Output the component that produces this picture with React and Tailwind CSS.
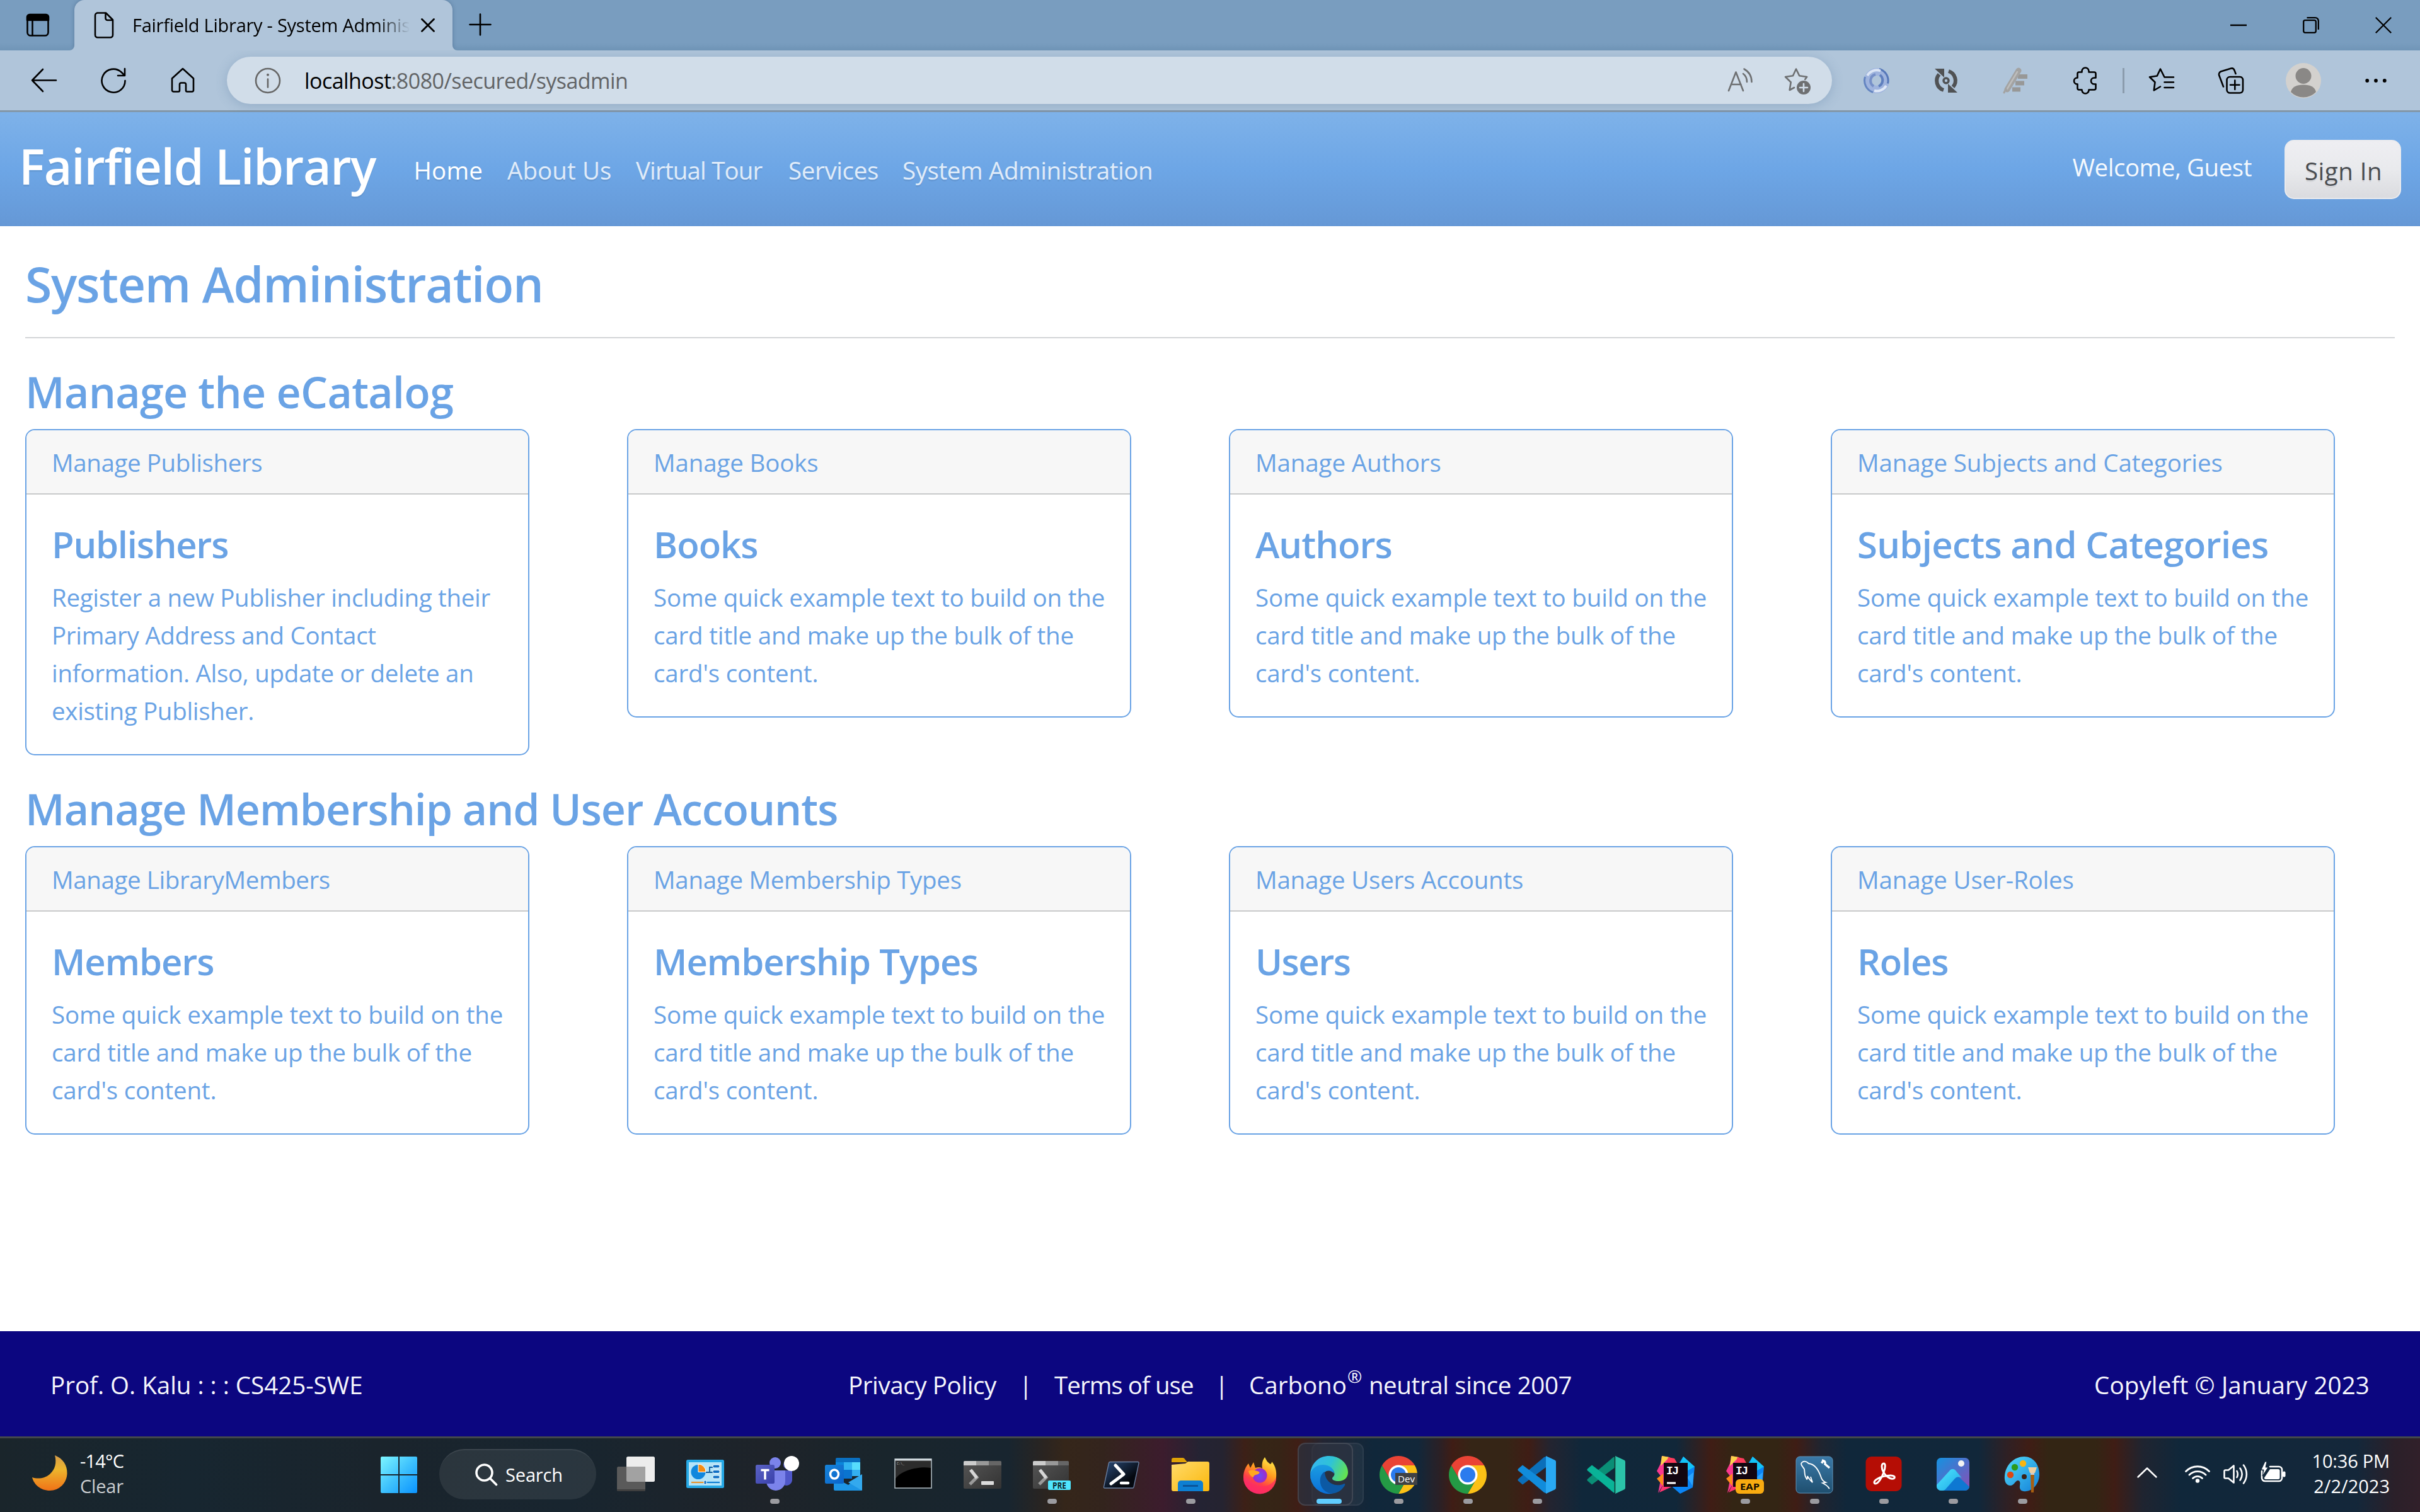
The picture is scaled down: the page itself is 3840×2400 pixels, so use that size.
import React from 'react';

const FONT = "font-['Open_Sans','Noto_Sans',sans-serif]";

/* ---------- shared svg helpers ---------- */

function Glyph({ children, size = 'size-[44px]', className = '' }) {
  return (
    <svg viewBox="0 0 44 44" fill="none" stroke="currentColor" strokeWidth="2.6" strokeLinecap="round" strokeLinejoin="round" className={`block shrink-0 ${size} ${className}`}>
      {children}
    </svg>
  );
}

function Slot({ children, w = 'w-[110px]' }) {
  return <div className={`flex h-full shrink-0 items-center justify-center ${w}`}>{children}</div>;
}

/* ---------- browser chrome ---------- */

function TabBar() {
  return (
    <div className="flex h-[80px] bg-[#799dbe] bg-linear-to-b from-[#799dbf] from-85% to-[#7095b7] text-black">
      <div className="flex w-[118px] shrink-0 items-center justify-center">
        <Glyph className="ml-[2px]">
          <rect x="5.5" y="5.5" width="33" height="33" rx="5" />
          <path d="M5 9c0-2 2-4 4-4h26c2 0 4 2 4 4v5H5z" fill="currentColor" />
          <path d="M13.5 14v24" />
        </Glyph>
      </div>
      <div className="relative flex w-[600px] shrink-0 items-center rounded-t-[16px] bg-[#b0c5da] shadow-[0_0_6px_rgba(50,80,115,0.45)] [clip-path:inset(0_-8px_0_-8px)]">
        <Glyph className="ml-[25px]">
          <path d="M11 2.500h14l11 11v24a4 4 0 0 1-4 4H12a4 4 0 0 1-4-4v-31a4 4 0 0 1 4-4z" />
          <path d="M24.500 3v8a3 3 0 0 0 3 3h8" />
        </Glyph>
        <div className="ml-[23px] w-[440px] text-[29px] leading-[40px] tracking-[-0.26px] whitespace-nowrap text-black [mask-image:linear-gradient(to_right,black_88%,transparent_100%)]">
          Fairfield Library - System Adminis
        </div>
        <svg viewBox="0 0 22 22" className="ml-[18px] size-[22px]" fill="none" stroke="#000" strokeWidth="2.800" strokeLinecap="round">
          <path d="M1.500 1.500l19 19M20.500 1.500l-19 19" />
        </svg>
        <svg viewBox="0 0 8 8" className="absolute bottom-0 left-[-8px] size-[8px]">
          <path d="M8 0v8H0a8 8 0 0 0 8-8z" fill="#b0c5da" />
        </svg>
        <svg viewBox="0 0 8 8" className="absolute right-[-8px] bottom-0 size-[8px]">
          <path d="M0 0v8h8a8 8 0 0 1-8-8z" fill="#b0c5da" />
        </svg>
      </div>
      <svg viewBox="0 0 36 36" className="mt-[21px] ml-[26px] size-[36px]" fill="none" stroke="#000" strokeWidth="2.600" strokeLinecap="round">
        <path d="M18 1.500v33M1.500 18h33" />
      </svg>
      <div className="ml-auto flex pr-px">
        <Slot w="w-[116px]">
          <svg viewBox="0 0 26 26" className="size-[26px]" stroke="#000" strokeWidth="2.500">
            <path d="M0 13h26" />
          </svg>
        </Slot>
        <Slot w="w-[114px]">
          <svg viewBox="0 0 26 26" className="size-[26px]" fill="none" stroke="#000" strokeWidth="2.300">
            <rect x="1.200" y="5.200" width="19.600" height="19.600" rx="2.500" />
            <path d="M6.500 1.200H20a4.800 4.800 0 0 1 4.800 4.800v14" />
          </svg>
        </Slot>
        <Slot w="w-[115px]">
          <svg viewBox="0 0 26 26" className="size-[26px]" stroke="#000" strokeWidth="2.200">
            <path d="M.8.800l24.400 24.400M25.200.8L.8 25.200" />
          </svg>
        </Slot>
      </div>
    </div>
  );
}

function Toolbar() {
  return (
    <div className="flex h-[98px] items-center border-b-3 border-[#8297a9] bg-[#b0c5da] pl-[15px] text-black">
      <Slot>
        <Glyph>
          <path d="M41 21.500H3M20 4L3 21.500 20 39" />
        </Glyph>
      </Slot>
      <Slot>
        <Glyph>
          <path d="M40.500 22A18.500 18.500 0 1 1 34.500 8.500L39.500 13.500M40 3v11h-11" />
        </Glyph>
      </Slot>
      <Slot>
        <Glyph>
          <path d="M5 18.500L22 3l17 15.500V37a2.500 2.500 0 0 1-2.500 2.500H29a2 2 0 0 1-2-2V28a2.500 2.500 0 0 0-2.500-2.500h-5A2.500 2.500 0 0 0 17 28v9.500a2 2 0 0 1-2 2H7.500A2.500 2.500 0 0 1 5 37z" />
        </Glyph>
      </Slot>
      <div className="ml-[15px] flex h-[75px] w-[2547px] shrink-0 items-center rounded-full bg-[#d1dde9] shadow-[0_3px_18px_rgba(80,115,155,0.3)]">
        <Glyph className="ml-[43px] text-[#666]">
          <circle cx="22" cy="22" r="19" />
          <path d="M22 19.500v13" />
          <circle cx="22" cy="12.800" r="1.300" fill="currentColor" strokeWidth="1.400" />
        </Glyph>
        <div className="ml-[36px] text-[34px] leading-[50px] tracking-[-0.55px] text-black">
          localhost<span className="text-[#626466]">:8080/secured/sysadmin</span>
        </div>
        <div className="ml-auto flex h-full pr-[10px] text-[#6e7072]">
          <Slot w="w-[90px]">
            <Glyph>
              <path d="M3 38L14.500 8.500 26 38M7 28h15.500" />
              <path d="M26 11c4 3 6 7.500 6 13M27.500 3.500c8 4.500 12 11.500 12 20.500" />
            </Glyph>
          </Slot>
          <Slot w="w-[90px]">
            <Glyph>
              <path d="M17 33l-7.300 4 2-12.500-8.700-8.500 12-1.700L20 3.500l5.200 10.800 12 1.700-3 4" />
              <circle cx="32" cy="33" r="11" fill="currentColor" stroke="none" />
              <path d="M32 27v12M26 33h12" stroke="#d1dde9" />
            </Glyph>
          </Slot>
        </div>
      </div>
      <div className="ml-[16px] flex h-full">
        <Slot>
          <svg viewBox="0 0 44 44" className="size-[44px]" fill="none">
            <circle cx="22" cy="22" r="14" stroke="#9fb4de" strokeWidth="12" />
            <path d="M26 3.500a19 19 0 0 1 13.500 23" stroke="#5678b8" strokeWidth="3" />
            <path d="M16 40.500A19.500 19.500 0 0 1 3.500 16" stroke="#6485c1" strokeWidth="3" />
            <path d="M7 14A17 17 0 0 1 28 6.500" stroke="#dbe5f5" strokeWidth="4" />
            <path d="M37 30a17 17 0 0 1-19 8" stroke="#dfe8f7" strokeWidth="4" />
            <path d="M17 31A10.500 10.500 0 0 1 20 12" stroke="#7690c8" strokeWidth="4" />
            <path d="M27 13a10.500 10.500 0 0 1-2 18" stroke="#5f7fbe" strokeWidth="4" />
          </svg>
        </Slot>
        <Slot>
          <svg viewBox="0 0 44 44" className="size-[44px]" fill="none" stroke="#505254" strokeWidth="6">
            <path d="M18 37A15.500 15.500 0 0 1 11 12" />
            <path d="M26 7a15.500 15.500 0 0 1 7 25" />
            <path d="M4 3h15v14z" fill="#505254" stroke="none" />
            <path d="M40 41H25V27z" fill="#505254" stroke="none" />
            <circle cx="22" cy="22" r="4" strokeWidth="3.500" />
          </svg>
        </Slot>
        <Slot>
          <svg viewBox="0 0 44 44" className="size-[44px]" fill="none" strokeLinecap="round">
            <g stroke="#989897" strokeWidth="7" strokeLinecap="butt">
              <path d="M26 15.500h15M22 26h14M17 36h13" />
            </g>
            <path d="M27 6L9 36" stroke="#a3a3a2" strokeWidth="9" />
            <path d="M25 8L9 35" stroke="#bdbdbc" strokeWidth="2.500" />
            <path d="M7 35l-3 6" stroke="#a3a3a2" strokeWidth="3" />
          </svg>
        </Slot>
        <Slot>
          <Glyph>
            <path d="M17.500 8.500V7a5.500 5.500 0 0 1 11 0v1.500H37a2.500 2.500 0 0 1 2.500 2.500v6.500H37a5 5 0 0 0 0 10h2.500V34a2.500 2.500 0 0 1-2.500 2.500h-8.500V37a5.500 5.500 0 0 1-11 0v-.5H13a2.500 2.500 0 0 1-2.500-2.500v-6.500H10a5 5 0 0 1 0-10h.5V11A2.500 2.500 0 0 1 13 8.500z" />
          </Glyph>
        </Slot>
        <div className="flex w-[12px] items-center justify-center">
          <div className="h-[40px] w-[3px] bg-[#8b9cad]" />
        </div>
        <Slot>
          <Glyph>
            <path d="M41 16.500H26.500L20 3.500l-5.200 11L3 16.200l8.500 8.300L9.800 37.500 20 31.500M26.500 24.500H41M26.500 33H41" />
          </Glyph>
        </Slot>
        <Slot>
          <Glyph>
            <rect x="15.500" y="16" width="25.500" height="25.500" rx="5" />
            <path d="M28.300 21.500v14.500M21 28.800h14.500" />
            <path d="M10 31.500L3.200 13.500a5 5 0 0 1 2.800-6L21.500 2.800c2.500-.8 5 .3 6 2.700l2 5.500" />
          </Glyph>
        </Slot>
        <Slot w="w-[120px]">
          <svg viewBox="0 0 56 56" className="size-[56px]">
            <circle cx="28" cy="28" r="28" fill="#d3d1ce" />
            <circle cx="28" cy="20.500" r="12.500" fill="#8a8886" />
            <path d="M8 46c2-8 9-11.500 20-11.500S46 38 48 46a28 28 0 0 1-40 0z" fill="#8a8886" />
          </svg>
        </Slot>
        <Slot>
          <svg viewBox="0 0 34 6" className="h-[6px] w-[34px]">
            <circle cx="3.200" cy="3" r="2.900" />
            <circle cx="17" cy="3" r="2.900" />
            <circle cx="30.800" cy="3" r="2.900" />
          </svg>
        </Slot>
      </div>
    </div>
  );
}

/* ---------- page ---------- */

const NAV = [
  { label: 'Home', cls: 'w-[148.5px] tracking-[0.2px] text-white' },
  { label: 'About Us', cls: 'w-[204px] tracking-[0.09px] text-white/80' },
  { label: 'Virtual Tour', cls: 'w-[242px] tracking-[-0.84px] text-white/80' },
  { label: 'Services', cls: 'w-[181px] tracking-[-0.36px] text-white/80' },
  { label: 'System Administration', cls: 'tracking-[-0.4px] text-white/80' },
];

function SiteHeader() {
  return (
    <header className="flex h-[181px] items-start bg-linear-to-b from-[#7eb2e9] via-[#6da6e6] via-50% to-[#6598d6] text-[38.5px] leading-[60px]">
      <div className="mt-[38px] ml-[30px] w-[626.5px] text-[77px] leading-[96px] font-semibold tracking-[-1.22px] text-white [text-shadow:0_3px_0_rgba(0,0,0,0.06)]">
        Fairfield Library
      </div>
      <nav className="mt-[62px] flex whitespace-nowrap [text-shadow:0_3px_0_rgba(0,0,0,0.06)]">
        {NAV.map((n) => (
          <a key={n.label} className={n.cls}>
            {n.label}
          </a>
        ))}
      </nav>
      <div className="mt-[57px] ml-auto tracking-[-0.46px] text-white/95">Welcome, Guest</div>
      <button className="mt-[44px] mr-[30px] ml-[52px] h-[94px] w-[185px] rounded-[15px] border-2 border-[#eaebee] bg-linear-to-b from-[#eeeef2] via-[#e9eaed] via-50% to-[#dadbdf] pt-[4px] pl-[2px] tracking-[0.5px] text-[#4a4d51] [text-shadow:0_3px_0_rgba(0,0,0,0.06)]">
        Sign In
      </button>
    </header>
  );
}

const LOREM = ["Some quick example text to build on the", 'card title and make up the bulk of the', "card's content."];

const SECTIONS = [
  {
    title: 'Manage the eCatalog',
    cls: 'tracking-[-0.7px]',
    cards: [
      {
        head: 'Manage Publishers',
        title: 'Publishers',
        hcls: 'tracking-[-0.4px]',
        tcls: 'tracking-[-1.26px]',
        lines: ['Register a new Publisher including their', 'Primary Address and Contact', 'information. Also, update or delete an', 'existing Publisher.'],
      },
      { head: 'Manage Books', title: 'Books', hcls: 'tracking-[-0.15px]', tcls: 'tracking-[-1px]', lines: LOREM },
      { head: 'Manage Authors', title: 'Authors', hcls: 'tracking-[-0.1px]', tcls: 'tracking-[-1px]', lines: LOREM },
      { head: 'Manage Subjects and Categories', title: 'Subjects and Categories', hcls: 'tracking-[-0.1px]', tcls: 'tracking-[-0.68px]', lines: LOREM },
    ],
  },
  {
    title: 'Manage Membership and User Accounts',
    cls: 'tracking-[-1.02px]',
    cards: [
      { head: 'Manage LibraryMembers', title: 'Members', hcls: 'tracking-[-0.4px]', tcls: 'tracking-[-1.1px]', lines: LOREM },
      { head: 'Manage Membership Types', title: 'Membership Types', hcls: 'tracking-[-0.3px]', tcls: 'tracking-[-1px]', lines: LOREM },
      { head: 'Manage Users Accounts', title: 'Users', hcls: 'tracking-[-0.2px]', tcls: 'tracking-[-1.5px]', lines: LOREM },
      { head: 'Manage User-Roles', title: 'Roles', hcls: 'tracking-[-0.15px]', tcls: 'tracking-[-1.2px]', lines: LOREM },
    ],
  },
];

function Card({ card }) {
  return (
    <article className="overflow-hidden rounded-[15px] border-2 border-[#6aa3e5] bg-white text-[38.5px] leading-[60px] whitespace-nowrap">
      <div className={`h-[102px] border-b-2 border-[#c9cacb] bg-[#f7f7f7] pt-[21px] pl-[40px] ${card.hcls}`}>{card.head}</div>
      <div className="pt-[43px] pb-[39px] pl-[40px]">
        <h3 className={`mb-[18px] text-[58px] leading-[72px] font-semibold ${card.tcls}`}>{card.title}</h3>
        {card.lines.map((l) => (
          <p key={l} className={card.lines === LOREM ? 'tracking-[-0.17px]' : 'tracking-[-0.31px]'}>
            {l}
          </p>
        ))}
      </div>
    </article>
  );
}

function Main() {
  return (
    <main className="h-[1754px] bg-white px-[40px] pt-[44px] text-[#6aa3e5]">
      <h1 className="text-[77px] leading-[96px] font-semibold tracking-[-1.21px]">System Administration</h1>
      <hr className="mt-[36px] border-t-2 border-[#d3d5d7]" />
      {SECTIONS.map((s) => (
        <section key={s.title} className="pt-[43px]">
          <h2 className={`mb-[17px] text-[68px] leading-[84px] font-semibold ${s.cls}`}>{s.title}</h2>
          <div className="grid grid-cols-[repeat(4,800px)] items-start gap-x-[155px]">
            {s.cards.map((c) => (
              <Card key={c.head} card={c} />
            ))}
          </div>
        </section>
      ))}
    </main>
  );
}

function SiteFooter() {
  return (
    <footer className="flex h-[167px] bg-[#0c0680] px-[80px] pt-[55px] text-[38.5px] leading-[60px] whitespace-nowrap text-[#f6f6fc]">
      <div className="w-[1266px]">Prof. O. Kalu : : : CS425-SWE</div>
      <div className="flex">
        <span className="w-[271px] tracking-[-0.39px]">Privacy Policy</span>
        <span className="w-[56px]">|</span>
        <span className="w-[255px] tracking-[-0.97px]">Terms of use</span>
        <span className="w-[54px]">|</span>
        <span>Carbono</span>
        <span className="relative top-[-14px] w-[35px] pl-px text-[28px]">®</span>
        <span className="tracking-[-0.38px]">neutral since 2007</span>
      </div>
      <div className="ml-auto tracking-[0.14px]">Copyleft © January 2023</div>
    </footer>
  );
}

/* ---------- taskbar ---------- */

function App60({ children, dot, active }) {
  return (
    <div className="relative flex h-full w-[110px] shrink-0 justify-center">
      {active && (
        <>
          <div className="absolute top-[7px] left-[27px] h-[100px] w-[83px] rounded-[12px] border-2 border-white/6 bg-white/5" />
          <div className="absolute top-[7px] left-[5px] h-[100px] w-[88px] rounded-[12px] border-2 border-white/10 bg-[#2b3240]/70" />
        </>
      )}
      <svg viewBox="0 0 60 60" className="relative mt-[28px] block size-[60px] overflow-visible">
        {children}
      </svg>
      {dot && <div className="absolute top-[96px] left-[47.5px] h-[8px] w-[15px] rounded-full bg-[#9b9ba0]" />}
      {active && <div className="absolute top-[96px] left-[35px] h-[8px] w-[40px] rounded-full bg-[#60cdff]" />}
    </div>
  );
}

function Defs() {
  return (
    <svg className="absolute size-0">
      <defs>
        <linearGradient id="moon" x1="0" y1="0" x2="0" y2="1">
          <stop offset="0" stopColor="#d69c48" />
          <stop offset=".4" stopColor="#ecb52d" />
          <stop offset="1" stopColor="#f07217" />
        </linearGradient>
        <linearGradient id="win" x1="0" y1="0" x2="1" y2="1">
          <stop offset="0" stopColor="#7df6ff" />
          <stop offset=".5" stopColor="#3fc2fd" />
          <stop offset="1" stopColor="#0a93ff" />
        </linearGradient>
        <linearGradient id="ps" x1="0" y1="0" x2="1" y2="1">
          <stop offset="0" stopColor="#2b4b78" />
          <stop offset=".7" stopColor="#04080f" />
        </linearGradient>
        <linearGradient id="folder" x1="0" y1="0" x2="1" y2="1">
          <stop offset="0" stopColor="#ffdb6b" />
          <stop offset="1" stopColor="#fbb70b" />
        </linearGradient>
        <linearGradient id="ff" x1=".8" y1="0" x2=".3" y2="1">
          <stop offset="0" stopColor="#fff04a" />
          <stop offset=".4" stopColor="#ff9a1f" />
          <stop offset=".7" stopColor="#ff4048" />
          <stop offset="1" stopColor="#f0139a" />
        </linearGradient>
        <radialGradient id="ffp">
          <stop offset="0" stopColor="#6b4cf5" />
          <stop offset="1" stopColor="#a029c8" />
        </radialGradient>
        <linearGradient id="edgeTop" x1="0" y1=".3" x2="1" y2=".6">
          <stop offset="0" stopColor="#35b6f0" />
          <stop offset=".5" stopColor="#2fc3d6" />
          <stop offset="1" stopColor="#64e34f" />
        </linearGradient>
        <linearGradient id="edgeLeft" x1="0" y1="0" x2="0" y2="1">
          <stop offset="0" stopColor="#1b9de2" />
          <stop offset="1" stopColor="#0a6fd8" />
        </linearGradient>
        <linearGradient id="dark" x1="0" y1="0" x2="1" y2="1">
          <stop offset="0" stopColor="#555" />
          <stop offset="1" stopColor="#333" />
        </linearGradient>
        <linearGradient id="mysql" x1="0" y1="0" x2="0" y2="1">
          <stop offset="0" stopColor="#3a79a8" />
          <stop offset="1" stopColor="#1f4f6f" />
        </linearGradient>
        <linearGradient id="photo" x1="0" y1="0" x2="1" y2="1">
          <stop offset="0" stopColor="#1492e0" />
          <stop offset="1" stopColor="#8a4db5" />
        </linearGradient>
        <linearGradient id="mount" x1="0" y1="0" x2="1" y2="1">
          <stop offset="0" stopColor="#50e6ff" />
          <stop offset="1" stopColor="#1ca8e6" />
        </linearGradient>
        <linearGradient id="palette" x1="0" y1="0" x2="1" y2="1">
          <stop offset="0" stopColor="#54dcfb" />
          <stop offset="1" stopColor="#1280d8" />
        </linearGradient>
        <linearGradient id="teams" x1="0" y1="0" x2="1" y2="1">
          <stop offset="0" stopColor="#5a62c3" />
          <stop offset="1" stopColor="#3940ab" />
        </linearGradient>
        <linearGradient id="olk" x1="0" y1="0" x2="1" y2="1">
          <stop offset="0" stopColor="#1784d9" />
          <stop offset="1" stopColor="#0a63c9" />
        </linearGradient>
      </defs>
    </svg>
  );
}

function ChromeMark() {
  return (
    <>
      <path d="M30 15h26a30 30 0 0 1-26 45l13-22.500z" fill="#fbc116" />
      <path d="M30 60A30 30 0 0 1 4 15l13 22.500L30 45l13-7.500z" fill="#249a45" />
      <path d="M30 15h26a30 30 0 0 0-52 0l13 22.500z" fill="#ea4335" />
      <circle cx="30" cy="30" r="15.500" fill="#fff" />
      <circle cx="30" cy="30" r="12" fill="#2b7bee" />
    </>
  );
}

function CodeMark({ a, b, c }) {
  return (
    <>
      <path d="M44 1v17L7 45.500 0 39.500c-.8-.8-.8-2 0-2.800L41 2z" fill={a} />
      <path d="M44 59V42L7 14.500 0 20.500c-.8.800-.8 2 0 2.800L41 58z" fill={b} />
      <path d="M44 0l14 6.500c1.300.6 2 1.700 2 3v41c0 1.300-.7 2.400-2 3L44 60z" fill={c} />
    </>
  );
}

function IdeaMark() {
  return (
    <>
      <path d="M8 0l12 2 10 10L11 44l-9 15 5-26L0 24 6 12z" fill="#f8388f" />
      <path d="M8 0l12 2-14 14z" fill="#fcd34a" />
      <path d="M0 36l10-8v20z" fill="#fd8b1c" />
      <path d="M18 2l10 2 8 14H14z" fill="#fc3b5b" />
      <path d="M42 1l18 16-3 33-20 10-16-14 14-34z" fill="#0a84f5" />
      <path d="M42 1l18 16-14 8-10-12z" fill="#13c4f5" />
      <path d="M4 58l8-16 18 4z" fill="#fb3470" />
      <path d="M48 34l10-8-1 22z" fill="#2aa4ff" />
      <rect x="11" y="11" width="38" height="38" fill="#120610" />
      <text x="15" y="29" fontSize="18" fontWeight="700" fill="#fff" fontFamily="Liberation Mono, monospace" textLength="20">
        IJ
      </text>
    </>
  );
}

function ConsoleMark({ w = 60 }) {
  return (
    <>
      <rect x="0" y="8" width={w} height="44" rx="2" fill="url(#dark)" />
      <path d="M0 10a2 2 0 0 1 2-2h18v7H0z" fill="#ccc" />
      <path d="M20 8h20v7H20z" fill="#999" />
      <path d={`M40 8h${w - 42}a2 2 0 0 1 2 2v5H40z`} fill="#666" />
      <path d="M12 23l9 11-11 11" fill="none" stroke="#9a9a9a" strokeWidth="5" />
      <path d="M11 22l10 13" fill="none" stroke="#d6d6d6" strokeWidth="5" />
    </>
  );
}

function TaskbarApps() {
  return (
    <div className="flex h-full">
      <App60>
        <rect x="15" y="1" width="45" height="40" rx="2.500" fill="#ededed" />
        <rect x="0" y="17" width="45" height="39" rx="2.500" fill="#5a5a5a" />
        <path d="M15 17h30v24H17.500a2.500 2.500 0 0 1-2.500-2.500z" fill="#a2a2a2" />
        <path d="M0 53h45v.5a2.500 2.500 0 0 1-2.500 2.500h-40A2.500 2.500 0 0 1 0 53.500z" fill="#3f3f3f" />
      </App60>
      <App60>
        <rect x="0" y="6" width="60" height="45" rx="2.500" fill="#26a9e6" />
        <rect x="4" y="10" width="52" height="37" fill="#b4e4f8" />
        <circle cx="19" cy="25.500" r="11.500" fill="#0f87dd" />
        <path d="M19 13v12.500h12A12 12 0 0 0 19 13z" fill="#f28c14" stroke="#fff" strokeWidth="1" />
        <path d="M31 26h6v-8h6M37 26h6" stroke="#0c5a9c" strokeWidth="1.800" fill="none" />
        <g fill="#0f6fc4" stroke="#fff" strokeWidth="1">
          <rect x="42" y="14" width="11" height="5" rx="2" />
          <rect x="42" y="22.500" width="11" height="5" rx="2" />
          <rect x="42" y="31" width="11" height="5" rx="2" />
        </g>
        <path d="M8 42h22" stroke="#e8942c" strokeWidth="2.200" />
        <path d="M30 42h23" stroke="#0f7fd4" strokeWidth="2.200" />
        <rect x="28" y="39" width="4" height="6" rx="1.500" fill="#0f6fc4" stroke="#fff" strokeWidth="1" />
      </App60>
      <App60 dot>
        <circle cx="31" cy="11" r="9" fill="#7b83eb" />
        <circle cx="51" cy="14" r="7" fill="#4a52bd" />
        <path d="M40 23h18v15a9 9 0 0 1-13 8z" fill="#4f57c8" />
        <path d="M17 23h30v17a15 15 0 0 1-30 0z" fill="#7b83eb" />
        <rect x="0" y="14" width="30" height="30" rx="2.500" fill="url(#teams)" />
        <path d="M8.500 22.500h13M15 22.500v15" stroke="#fff" strokeWidth="3.500" />
        <circle cx="57" cy="12" r="12" fill="#fff" />
      </App60>
      <App60>
        <path d="M17 5a2 2 0 0 1 2-2h35a2 2 0 0 1 2 2v20H17z" fill="#0a6fc0" />
        <path d="M17 10h13v12H17z" fill="#0b86db" />
        <path d="M30 10h13v12H30z" fill="#32b4f2" />
        <path d="M43 10h13v12H43z" fill="#57dcfd" />
        <path d="M17 22h26v14H17z" fill="#0a74d0" />
        <path d="M43 22h13v10H43z" fill="#34b0f0" />
        <path d="M14 34l23 12 22-16v23a2 2 0 0 1-2 2H16a2 2 0 0 1-2-2z" fill="#1d96e6" />
        <path d="M37 42l22 13V29z" fill="#33a9ee" />
        <rect x="0" y="14" width="30" height="30" rx="2.500" fill="url(#olk)" />
        <ellipse cx="15" cy="29" rx="6.500" ry="7" fill="none" stroke="#fff" strokeWidth="3.500" />
      </App60>
      <App60>
        <rect x="1" y="5" width="58" height="46" fill="#000" stroke="#a9b4bb" strokeWidth="1.600" />
        <path d="M2 7h56v12C40 16 12 22 2 36z" fill="#2c2c2c" />
        <path d="M1 4.500h58v3H1z" fill="#d5dde2" />
        <text x="4" y="14" fontSize="5" fill="#bbb" fontFamily="Liberation Mono, monospace">
          C:\_
        </text>
      </App60>
      <App60>
        <ConsoleMark />
        <rect x="28" y="40" width="20" height="6" rx="1" fill="#dcdcdc" />
      </App60>
      <App60 dot>
        <ConsoleMark w={57} />
        <rect x="24" y="39" width="36" height="15" rx="2" fill="#50e6ff" />
        <text x="42" y="51.500" fontSize="14" fontWeight="700" textAnchor="middle" fill="#10252c" fontFamily="Open Sans, sans-serif" textLength="22" lengthAdjust="spacingAndGlyphs">
          PRE
        </text>
      </App60>
      <App60>
        <path d="M12.500 9.500h44a1.500 1.500 0 0 1 1.500 2L50 49.500a2 2 0 0 1-2 1.500H4a1.500 1.500 0 0 1-1.500-2L10.500 11a2 2 0 0 1 2-1.500z" fill="url(#ps)" stroke="#6b82a4" strokeWidth="1.300" />
        <path d="M21 15l13 14L14 44" fill="none" stroke="#fff" strokeWidth="5" strokeLinecap="round" strokeLinejoin="round" />
        <path d="M30 43h11" stroke="#fff" strokeWidth="4.500" strokeLinecap="round" />
      </App60>
      <App60 dot>
        <path d="M0 6a3 3 0 0 1 3-3h14c2 0 3 .5 4 2l4 5H0z" fill="#e0a106" />
        <path d="M0 14l22-2 4-3h31a3 3 0 0 1 3 3v41a3 3 0 0 1-3 3H3a3 3 0 0 1-3-3z" fill="url(#folder)" />
        <path d="M10 56V44a5 5 0 0 1 5-5h30a5 5 0 0 1 5 5v12z" fill="#0d7fd2" />
        <path d="M18 47.500h24" stroke="#0a4f93" strokeWidth="2.600" />
      </App60>
      <App60>
        <path d="M38 2c3 6 4 8 9 11 2-2 2-3 2-4 6 7 8 16 7 25A26 26 0 0 1 4 34c0-9 3-16 8-22l3 7 5-9 3 9c5-2 9-1 11 1-1-7 0-13 4-18z" fill="url(#ff)" />
        <circle cx="30" cy="31" r="11.500" fill="url(#ffp)" />
        <path d="M12 24c7-3 10-1 14 0 4 1 5 3 1 5-4 1-7 2-7 5-4-1-7-5-8-10z" fill="#ffa81f" />
        <path d="M4 35a26 26 0 0 0 52-1c-4 10-14 15-24 14C18 47 8 42 4 35z" fill="#ff2f5c" opacity=".75" />
      </App60>
      <App60 active>
        <path d="M0 28C2 10 15 0 30 0c17 0 30 12 30 26 0 9-7 14-15 14-6 0-10-2-10-4 0-3 5-4 3-10-2-7-9-10-16-10C12 16 4 20 0 28z" fill="url(#edgeTop)" />
        <path d="M0 28c4-10 12-14 20-14 10 0 18 6 18 14-4-5-11-6-15-2-6 6-5 20 4 28 3 3 6 5 9 5.500A30 30 0 0 1 0 28z" fill="url(#edgeLeft)" />
        <path d="M23 25c-9 5-9 19-3 27 4 5 10 8 16 7.500 9-1 15-6 19-13 1-2-.5-3-2-2C44 49 24 46 23 25z" fill="#0c59a4" />
      </App60>
      <App60 dot>
        <ChromeMark />
        <rect x="25" y="27" width="35" height="19" fill="#3f4245" />
        <text x="42.500" y="41.500" fontSize="15" textAnchor="middle" fill="#fff" fontFamily="Open Sans, sans-serif" textLength="27" lengthAdjust="spacingAndGlyphs">
          Dev
        </text>
      </App60>
      <App60 dot>
        <ChromeMark />
      </App60>
      <App60 dot>
        <CodeMark a="#0b6fba" b="#118cdb" c="#29a9f3" />
      </App60>
      <App60>
        <CodeMark a="#0a8e76" b="#09b397" c="#2bc3a9" />
        <path d="M43.500 1v58" stroke="#12302f" strokeWidth="1.500" />
      </App60>
      <App60>
        <IdeaMark />
        <path d="M16 43h14" stroke="#fff" strokeWidth="3" />
      </App60>
      <App60 dot>
        <IdeaMark />
        <rect x="15" y="37" width="45" height="23" rx="6" fill="#f9ab10" />
        <text x="37.500" y="54" fontSize="15" fontWeight="700" textAnchor="middle" fill="#140d02" fontFamily="Open Sans, sans-serif" textLength="31" lengthAdjust="spacingAndGlyphs">
          EAP
        </text>
      </App60>
      <App60 dot>
        <rect x="1" y="1" width="58" height="58" rx="6" fill="url(#mysql)" stroke="#5e94ba" strokeWidth="1" />
        <path d="M9 12c3-5 8-4 12 0 9 1 15 9 19 20 1 4 3 8 8 10l-5 1c4 2 8 4 10 8l1 1M9 12c0 4 3 5 5 9 1 6 0 10 3 14 1 3 2 3 2-3 2 4 5 7 8 10l-3-9" fill="none" stroke="#fff" strokeWidth="1.800" />
        <path d="M42 7c4 0 6 3 5 6l7 6M44 11l-3-2" stroke="#fff" strokeWidth="3.500" fill="none" />
      </App60>
      <App60 dot>
        <rect x="1.500" y="1" width="57" height="55" rx="9" fill="#b50d05" />
        <path d="M30 12c3 0 3 6 0 14-3 9-9 18-13 18-3 0-3-4 2-7 6-4 15-6 22-6 5 0 7 2 6 4s-6 2-11-2c-5-3-9-11-9-16 0-3 1-5 3-5z" fill="none" stroke="#fff" strokeWidth="3" />
      </App60>
      <App60 dot>
        <rect x="4" y="3" width="52" height="52" rx="7" fill="url(#photo)" />
        <path d="M12 55l20-19c3-3.500 7-3.500 10 0l14 13a7 7 0 0 1-7 6z" fill="#0e78d2" />
        <path d="M4 46l21-23c2.500-3 6.500-3 9 0l10 12c-5-3-9-2-12 2L18 53c-1.500 1.500-3 2-5 2h-2a7 7 0 0 1-7-7z" fill="url(#mount)" />
        <circle cx="43" cy="12" r="5" fill="#f3f3f3" />
      </App60>
      <App60 dot>
        <path d="M33 1c14 0 24 12 24 28 0 15-10 26-21 27-7 1-11-2-10-9 1-5 0-8-3-8-4 0-6 8-12 8C4 47 1 40 2 31 4 13 18 1 33 1z" fill="url(#palette)" />
        <circle cx="31" cy="12" r="5.200" fill="#f9b50f" />
        <circle cx="18" cy="18" r="5.200" fill="#2c9a1d" />
        <circle cx="11" cy="30" r="5.200" fill="#dd4814" />
        <circle cx="33" cy="33" r="4" fill="#3a2118" />
        <path d="M39 18h14l-3 9h-8z" fill="#f0cfa0" />
        <path d="M43 27h6v4h-6z" fill="#c9ccd0" />
        <path d="M43 30h6l-1 28h-4z" fill="#a85f10" />
      </App60>
    </div>
  );
}

function Taskbar() {
  return (
    <div className="flex h-[120px] border-t-3 border-[#43484b] bg-[#18242d] bg-[linear-gradient(90deg,#1a252b_0px,#172630_300px,#1a242c_600px,#18252f_900px,#1e2329_1220px,#19252c_1400px,#18252f_1600px,#2b2420_1660px,#35261a_1690px,#33241d_1750px,#3c1c2d_1845px,#242333_1905px,#252330_1940px,#3d2017_1975px,#352516_2000px,#362416_2030px,#3f1e16_2060px,#222533_2100px,#10273a_2180px,#12273a_2250px,#2b2025_2285px,#3f1d15_2305px,#352516_2335px,#352516_2390px,#3f1d15_2425px,#232430_2460px,#10273a_2510px,#112739_2660px,#3f1d15_2715px,#332514_2750px,#332514_2820px,#3f1d15_2850px,#1f2430_2890px,#10273a_2930px,#11273a_3140px,#2f2024_3185px,#3f1d15_3220px,#332514_3250px,#332514_3325px,#3f1d15_3355px,#1f2430_3400px,#10273a_3460px,#14273a_3740px,#2b2029_3800px,#31202a_3840px)] text-[29px] leading-[40px] text-white">
      <div className="flex w-[600px] shrink-0 items-start">
        <svg viewBox="0 0 56 56" className="mt-[27px] ml-[51px] size-[56px]">
          <path d="M36 0c13 5 20 16 19.500 29C55 44 43 56 28 56 14 56 3 47 0 35c9 3 20 2 28-5 9-8 11-19 8-30z" fill="url(#moon)" />
        </svg>
        <div className="mt-[16px] ml-[20px]">
          <div className="tracking-[-0.79px]">-14°C</div>
          <div className="tracking-[-0.2px] text-[#c9cccf]">Clear</div>
        </div>
      </div>
      <div className="flex w-[97px] shrink-0 pt-[29px] pl-[4px]">
        <svg viewBox="0 0 58 58" className="size-[58px]" fill="url(#win)">
          <path d="M2 0h26v28H0V2a2 2 0 0 1 2-2zM30 0h26a2 2 0 0 1 2 2v26H30zM0 30h28v28H2a2 2 0 0 1-2-2zM30 30h28v26a2 2 0 0 1-2 2H30z" />
        </svg>
      </div>
      <div className="mt-[17px] flex h-[80px] w-[249px] shrink-0 items-center rounded-full border-t-2 border-white/8 bg-white/8 pl-[57px]">
        <svg viewBox="0 0 36 36" className="size-[36px]" fill="none" stroke="#fff" strokeWidth="3.600" strokeLinecap="round">
          <circle cx="14.500" cy="14.500" r="12.500" />
          <path d="M24 24l9.500 9.500" />
        </svg>
        <span className="ml-[12px] tracking-[-0.15px]">Search</span>
      </div>
      <div className="ml-[8px] h-full shrink-0">
        <TaskbarApps />
      </div>
      <div className="flex flex-1 items-start">
        <svg viewBox="0 0 32 17" className="mt-[46px] ml-[127px] h-[17px] w-[32px]" fill="none" stroke="#fff" strokeWidth="2.500" strokeLinecap="round" strokeLinejoin="round">
          <path d="M1.500 15.500L16 1.500l14.500 14" />
        </svg>
        <svg viewBox="0 0 40 30" className="mt-[41px] ml-[44px] h-[30px] w-[40px]" fill="none" stroke="#fff" strokeWidth="2.800" strokeLinecap="round">
          <path d="M1.500 11.500a26 26 0 0 1 37 0M7 17a18.500 18.500 0 0 1 26 0M12.500 22.500a10.500 10.500 0 0 1 15 0" />
          <circle cx="20" cy="26.500" r="3.200" fill="#fff" stroke="none" />
        </svg>
        <svg viewBox="0 0 40 34" className="mt-[40px] ml-[21px] h-[34px] w-[40px]" fill="none" stroke="#fff" strokeWidth="2.600" strokeLinecap="round" strokeLinejoin="round">
          <path d="M1.500 12a1.500 1.500 0 0 1 1.500-1.500h5L16.500 3.500v27L8 23.500H3A1.500 1.500 0 0 1 1.500 22z" />
          <path d="M21.500 12c1.500 3 1.500 7 0 10M26.500 7.500c4 6 4 13 0 19M32 2.500c6.500 9 6.500 20 0 29" />
        </svg>
        <svg viewBox="0 0 40 34" className="mt-[37px] ml-[19px] h-[34px] w-[40px]">
          <path d="M15 8h14a5 5 0 0 1 5 5v13a5 5 0 0 1-5 5H7a5 5 0 0 1-5-5V15" fill="none" stroke="#fff" strokeWidth="2.600" strokeLinecap="round" />
          <rect x="35" y="15.500" width="4.500" height="9" rx="2" fill="#fff" />
          <path d="M15 12h13a2.500 2.500 0 0 1 2.500 2.500v11A2.500 2.500 0 0 1 28 28H8a2 2 0 0 1-2-2.500z" fill="#fff" />
          <path d="M7 0L1 13h4L3 23 12 9H8l2-9z" fill="#fff" stroke="#12273a" strokeWidth="1" />
        </svg>
        <div className="mt-[16px] mr-[48px] ml-auto text-right">
          <div className="tracking-[-0.2px]">10:36 PM</div>
          <div className="tracking-[0px]">2/2/2023</div>
        </div>
      </div>
    </div>
  );
}

export default function App() {
  return (
    <div className={`relative flex h-[2400px] w-[3840px] flex-col overflow-hidden bg-white ${FONT}`}>
      <Defs />
      <TabBar />
      <Toolbar />
      <SiteHeader />
      <Main />
      <SiteFooter />
      <Taskbar />
    </div>
  );
}
